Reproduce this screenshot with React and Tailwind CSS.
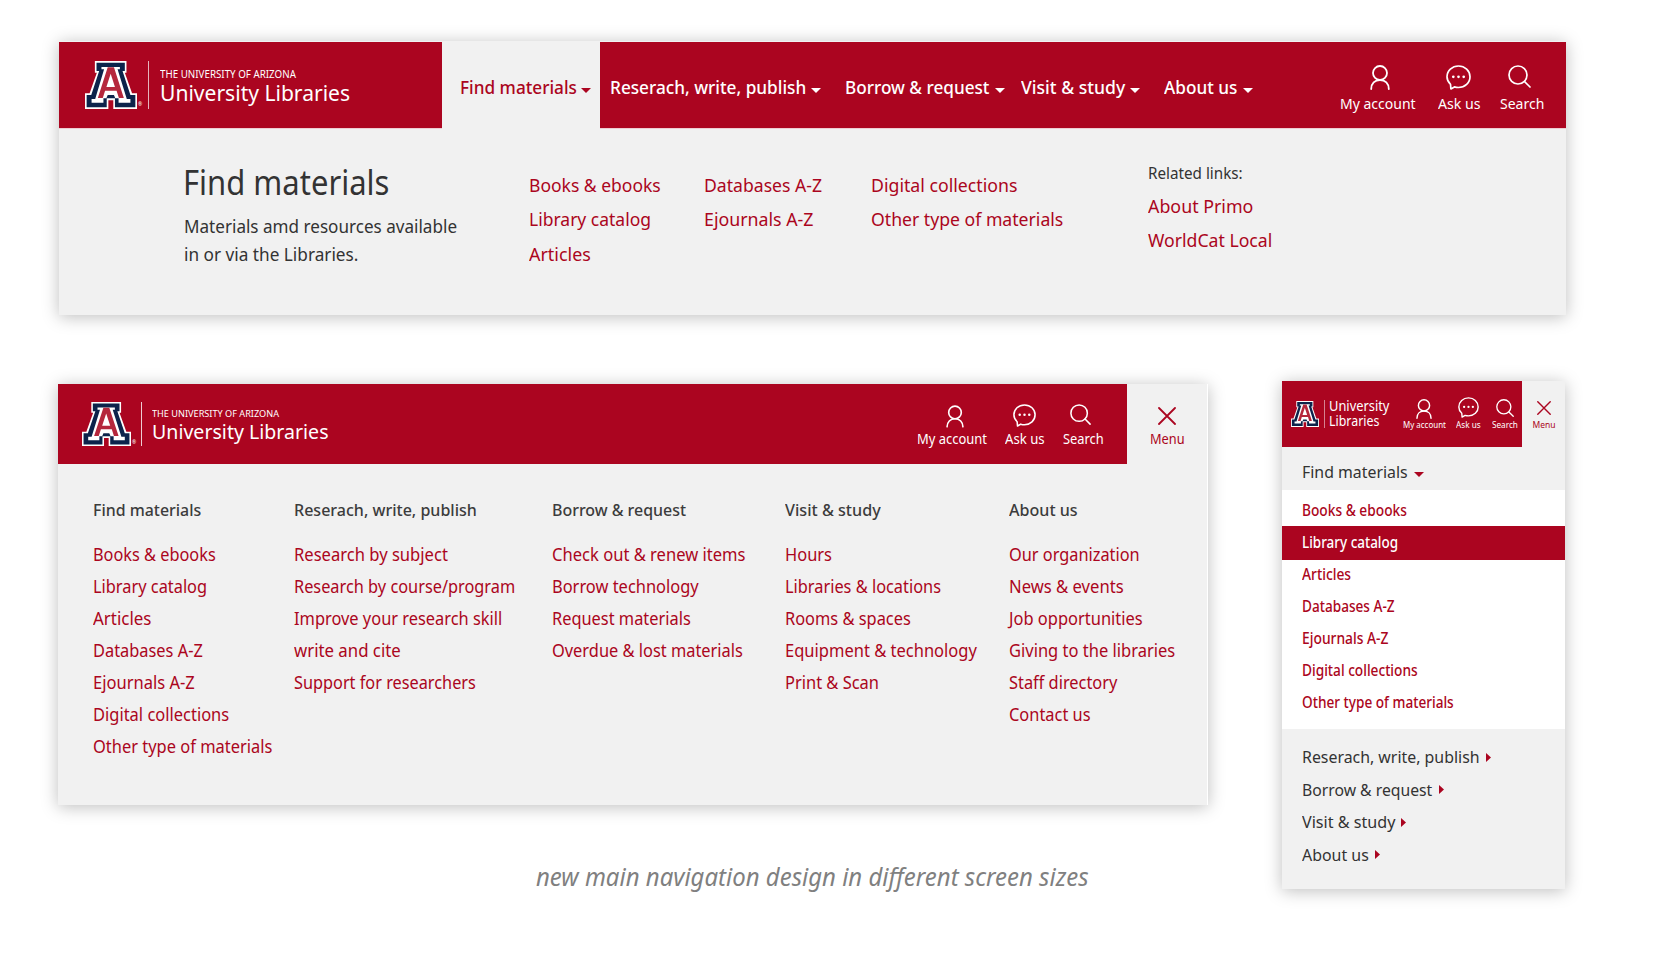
import { useLayoutEffect, useRef, useState } from 'react';

/* Text set condensed so that it fills a given measure. */
function T({ w, className = '', children }) {
  const ref = useRef(null);
  const [scale, setScale] = useState(1);
  useLayoutEffect(() => {
    if (ref.current) setScale((w + 1) / ref.current.offsetWidth);
  }, [w, children]);
  return (
    <span className={`-mr-px block shrink-0 ${className}`} style={{ width: w + 1 }}>
      <span ref={ref} className="inline-block origin-left whitespace-nowrap align-top" style={{ transform: `scaleX(${scale})` }}>
        {children}
      </span>
    </span>
  );
}

function BlockA({ className }) {
  return (
    <svg viewBox="0 0 158 144" preserveAspectRatio="none" className={`shrink-0 ${className}`}>
      <path fill="#fff" d="M30 0H126V35H121L143 97H158V144H86V118H71V144H0V97H14L36 35H30Z" />
      <path fill="#0c234b" d="M35 5H121V30H114L138 102H153V139H91V112H66V139H5V102H19L43 30H35Z" />
      <path fill="#fff" d="M50 18H106V25H99L127 114H138V125H102V112H92L88 102H69L65 112H56V125H20V114H31L58 25H50Z" />
      <path fill="#b5273c" fillRule="evenodd" d="M69 19H88L118 111H103L96 89H61L54 111H39ZM78 38L65 78H91Z" />
    </svg>
  );
}

function UserIcon({ className }) {
  return (
    <svg viewBox="0 0 20 25" fill="none" stroke="currentColor" strokeWidth="1.8" strokeLinecap="round" className={className}>
      <circle cx="10" cy="8" r="7" />
      <path d="M1.2 24C1.2 18.6 4.8 15 10 15s8.8 3.600 8.800 9" />
    </svg>
  );
}

function ChatIcon({ className }) {
  return (
    <svg viewBox="0 0 25 25" fill="none" stroke="currentColor" strokeWidth="1.700" strokeLinecap="round" strokeLinejoin="round" className={className}>
      <path d="M4.900 23.900L4.500 19.300C2.300 17.300 1 14.700 1 11.800 1 5.700 6.100 1 12.500 1S24 5.700 24 11.800 18.900 22.500 12.500 22.500c-1.500 0-2.800-.2-4.100-.6Z" />
      <g fill="currentColor" stroke="none">
        <circle cx="7.300" cy="11.800" r="1.350" />
        <circle cx="12.500" cy="11.800" r="1.350" />
        <circle cx="17.700" cy="11.800" r="1.350" />
      </g>
    </svg>
  );
}

function SearchIcon({ className }) {
  return (
    <svg viewBox="0 0 23 23" fill="none" stroke="currentColor" strokeWidth="1.700" strokeLinecap="round" className={className}>
      <circle cx="10" cy="10" r="9" />
      <path d="M16.500 16.500L22 22" />
    </svg>
  );
}

function CloseIcon({ className }) {
  return (
    <svg viewBox="0 0 18 18" fill="none" stroke="currentColor" strokeWidth="1.800" strokeLinecap="round" className={className}>
      <path d="M1 1L17 17M17 1L1 17" />
    </svg>
  );
}

function CaretDown({ className = '' }) {
  return (
    <svg viewBox="0 0 10 5" className={`h-[5px] w-[10px] shrink-0 ${className}`}>
      <path d="M0 0H10L5 5Z" fill="currentColor" />
    </svg>
  );
}

function CaretRight({ className = '' }) {
  return (
    <svg viewBox="0 0 5 9" className={`h-[9px] w-[5px] shrink-0 text-[#ab0520] ${className}`}>
      <path d="M0 0V9L5 4.500Z" fill="currentColor" />
    </svg>
  );
}

function Links({ items, className = '' }) {
  return (
    <ul className={className}>
      {items.map(([label, w]) => (
        <li key={label}><a><T w={w}>{label}</T></a></li>
      ))}
    </ul>
  );
}

const columns = [
  { title: ['Find materials', 107.5], width: 'w-[201px]', items: [['Books & ebooks', 122], ['Library catalog', 113], ['Articles', 57], ['Databases A-Z', 108.5], ['Ejournals A-Z', 101], ['Digital collections', 135.5], ['Other type of materials', 178.5]] },
  { title: ['Reserach, write, publish', 182], width: 'w-[258px]', items: [['Research by subject', 152.5], ['Research by course/program', 220], ['Improve your research skill', 207], ['write and cite', 105.5], ['Support for researchers', 180.5]] },
  { title: ['Borrow & request', 133], width: 'w-[233px]', items: [['Check out & renew items', 193], ['Borrow technology', 145.5], ['Request materials', 137.5], ['Overdue & lost materials', 190]] },
  { title: ['Visit & study', 95], width: 'w-[224px]', items: [['Hours', 46], ['Libraries & locations', 155], ['Rooms & spaces', 124.5], ['Equipment & technology', 190.5], ['Print & Scan', 93]] },
  { title: ['About us', 68], width: 'w-[180px]', items: [['Our organization', 129.5], ['News & events', 114], ['Job opportunities', 132.5], ['Giving to the libraries', 165], ['Staff directory', 107.5], ['Contact us', 80.5]] },
];

const mobileLinks = [['Books & ebooks', 103.5], ['Library catalog', 95.5], ['Articles', 48], ['Databases A-Z', 92], ['Ejournals A-Z', 85.5], ['Digital collections', 114.5], ['Other type of materials', 151]];

const mobileSections = [['Reserach, write, publish', 176.5], ['Borrow & request', 129.5], ['Visit & study', 92], ['About us', 65.5]];

function DesktopNav() {
  return (
    <section className="h-[274px] w-[1507px] bg-[#f1f1f1] shadow-[0_2px_16px_rgba(0,0,0,0.26)]">
      <header className="flex h-[88px] pt-px text-white">
        <div className="flex w-[383px] border-b border-white/80 bg-[#ab0520] pt-[19px] pl-[26px]">
          <BlockA className="h-12 w-[52px]" />
          <span className="mt-[41px] ml-px text-[5px] leading-none">®</span>
          <span className="ml-[6px] h-12 w-px bg-white/70" />
          <div className="ml-[11px] pt-[7px]">
            <T w={135} className="text-[10px] leading-3">THE UNIVERSITY OF ARIZONA</T>
            <T w={189} className="mt-px text-[21.500px] leading-6">University Libraries</T>
          </div>
        </div>
        <div className="-mt-px flex w-[158px] items-start pt-[35px] pl-[17.500px] text-[#ab0520]">
          <T w={115.500} className="text-lg leading-[22px] font-medium">Find materials</T>
          <CaretDown className="mt-[12px] ml-[6px]" />
        </div>
        <nav className="flex flex-1 border-b border-white/80 bg-[#ab0520] pt-[34px] pl-[9.500px] text-lg leading-[22px] font-medium">
          <T w={195}>Reserach, write, publish</T>
          <CaretDown className="mt-[12px] ml-[6px]" />
          <T w={143} className="ml-[24px]">Borrow & request</T>
          <CaretDown className="mt-[12px] ml-[7px]" />
          <T w={103.500} className="ml-[16.500px]">Visit & study</T>
          <CaretDown className="mt-[12px] ml-[5px]" />
          <T w={72.500} className="ml-[24.500px]">About us</T>
          <CaretDown className="mt-[12px] ml-[6px]" />
        </nav>
        <div className="flex w-[226px] border-b border-white/80 bg-[#ab0520] pt-[23px] text-sm leading-5">
          <a className="flex w-[75px] flex-col items-center">
            <UserIcon className="ml-1 h-[25px] w-5" />
            <T w={75} className="mt-[4px]">My account</T>
          </a>
          <a className="ml-[22.500px] flex w-[42px] flex-col items-center">
            <ChatIcon className="mr-px h-[25px] w-[25px]" />
            <T w={41.500} className="mt-[4px]">Ask us</T>
          </a>
          <a className="ml-[20.500px] flex w-[43px] flex-col items-center">
            <SearchIcon className="mr-[5px] mb-0.5 h-[23px] w-[23px]" />
            <T w={43} className="mt-[4px]">Search</T>
          </a>
        </div>
      </header>
      <div className="flex pl-[124px] text-[#333]">
        <div className="w-[346px] pt-[33px]">
          <T w={205} className="text-[34px] leading-10">Find materials</T>
          <div className="mt-[10px] pl-px text-[17.500px] leading-7">
            <T w={272.500}>Materials amd resources available</T>
            <T w={173}>in or via the Libraries.</T>
          </div>
        </div>
        <Links className="w-[174.500px] pt-[38.500px] text-[18.500px] leading-[34.500px] text-[#ab0520]" items={[['Books & ebooks', 130.5], ['Library catalog', 121], ['Articles', 61]]} />
        <Links className="w-[167px] pt-[38.500px] text-[18.500px] leading-[34.500px] text-[#ab0520]" items={[['Databases A-Z', 117], ['Ejournals A-Z', 108.500]]} />
        <Links className="w-[277px] pt-[38.500px] text-[18.500px] leading-[34.500px] text-[#ab0520]" items={[['Digital collections', 145.500], ['Other type of materials', 191.500]]} />
        <div className="pt-[31px]">
          <T w={94} className="text-[16.500px] leading-[26px]">Related links:</T>
          <Links className="mt-[2.500px] text-[18.500px] leading-[34.500px] text-[#ab0520]" items={[['About Primo', 104], ['WorldCat Local', 123]]} />
        </div>
      </div>
    </section>
  );
}

function TabletNav() {
  return (
    <section className="h-[421px] w-[1150px] border-r border-white bg-[#f1f1f1] shadow-[0_2px_16px_rgba(0,0,0,0.26)]">
      <header className="flex h-20 text-white">
        <div className="flex w-[859px] bg-[#ab0520] pt-[18px] pl-6">
          <BlockA className="h-[44px] w-[49px]" />
          <span className="mt-[38px] ml-px text-[5px] leading-none">®</span>
          <span className="ml-[5px] h-[44px] w-px bg-white/80" />
          <div className="ml-[10px] pt-[6px]">
            <T w={126} className="text-[9px] leading-3">THE UNIVERSITY OF ARIZONA</T>
            <T w={176} className="mt-px text-[20px] leading-[22px]">University Libraries</T>
          </div>
        </div>
        <div className="flex w-[210px] bg-[#ab0520] pt-5 text-[13.500px] leading-5">
          <a className="flex w-[69px] flex-col items-center">
            <UserIcon className="mt-px ml-1.5 h-[23px] w-[18px]" />
            <T w={69} className="mt-[0.500px]">My account</T>
          </a>
          <a className="ml-[18.500px] flex w-[39px] flex-col items-center">
            <ChatIcon className="mb-px h-[23px] w-[23px]" />
            <T w={39} className="mt-[0.500px]">Ask us</T>
          </a>
          <a className="ml-[19px] flex w-10 flex-col items-center">
            <SearchIcon className="mr-1 mb-[3px] h-[21px] w-[21px]" />
            <T w={40} className="mt-[0.500px]">Search</T>
          </a>
        </div>
        <a className="flex w-[80px] flex-col items-center pt-[23px] text-[13.500px] leading-5 text-[#ab0520]">
          <CloseIcon className="mr-px h-[18px] w-[18px]" />
          <T w={34} className="mt-[3.500px]">Menu</T>
        </a>
      </header>
      <div className="flex pt-[34px] pl-[35px]">
        {columns.map((c) => (
          <div key={c.title[0]} className={`shrink-0 ${c.width}`}>
            <h3 className="text-[17px] leading-6 font-medium text-[#3c3c3c]"><T w={c.title[1]}>{c.title[0]}</T></h3>
            <Links items={c.items} className="mt-4 text-[17.500px] leading-8 text-[#ab0520]" />
          </div>
        ))}
      </div>
    </section>
  );
}

function MobileNav() {
  return (
    <section className="h-[508px] w-[283px] bg-[#f1f1f1] text-[#333] shadow-[0_2px_16px_rgba(0,0,0,0.26)]">
      <header className="flex h-[66px] text-white">
        <div className="flex w-[240px] bg-[#ab0520] pl-[9px]">
          <BlockA className="mt-[20px] h-[26px] w-[28px]" />
          <span className="mt-[19px] ml-[5px] h-7 w-px bg-white/50" />
          <div className="ml-1 w-[62px] pt-[18px] text-[13.500px] leading-[15px]">
            <T w={59}>University</T>
            <T w={49.500}>Libraries</T>
          </div>
          <div className="ml-[12px] flex pt-4 text-[8.500px] leading-3">
            <a className="flex w-[42px] flex-col items-center">
              <UserIcon className="mt-[2px] h-[20px] w-[16px]" />
              <T w={42}>My account</T>
            </a>
            <a className="ml-[11px] flex w-[24px] flex-col items-center">
              <ChatIcon className="mb-px h-[21px] w-[21px]" />
              <T w={24}>Ask us</T>
            </a>
            <a className="ml-[12px] flex w-[25px] flex-col items-center">
              <SearchIcon className="mt-[2px] mb-[2px] h-[18px] w-[18px]" />
              <T w={25}>Search</T>
            </a>
          </div>
        </div>
        <a className="flex w-[43px] flex-col items-center pt-5 text-[8.500px] leading-3 text-[#ab0520]">
          <CloseIcon className="h-[14px] w-[14px]" />
          <T w={22} className="mt-[4px]">Menu</T>
        </a>
      </header>
      <div className="flex h-[43px] pt-[13px] pl-5">
        <T w={104.5} className="text-[17px] leading-6">Find materials</T>
        <CaretDown className="mt-[12px] ml-[7px] text-[#ab0520]" />
      </div>
      <ul className="h-[239px] bg-white pt-1 text-[15.500px] leading-8 font-medium text-[#ab0520]">
        {mobileLinks.map(([label, w], i) => (
          <li key={label} className={i === 1 ? 'h-[34px] bg-[#ab0520] pl-5 text-white' : i === 2 ? 'h-[30px] pl-5 leading-7' : 'h-8 pl-5'}>
            <T w={w}>{label}</T>
          </li>
        ))}
      </ul>
      <ul className="pt-[12px] text-[17px] leading-[32.500px]">
        {mobileSections.map(([label, w]) => (
          <li key={label} className="flex items-center pl-5">
            <T w={w}>{label}</T>
            <CaretRight className="ml-[7px]" />
          </li>
        ))}
      </ul>
    </section>
  );
}

export default function App() {
  return (
    <main className="h-[964px] w-[1659px] overflow-hidden bg-white pt-[41px] pl-[58px] font-['Noto_Sans',sans-serif]">
      <div className="pl-px"><DesktopNav /></div>
      <div className="mt-[66px] flex gap-[74px]">
        <div className="pt-[3px]">
          <TabletNav />
          <div className="mt-[53px] pl-[478px] text-[25px] leading-9 text-[#808080] italic">
            <T w={552}>new main navigation design in different screen sizes</T>
          </div>
        </div>
        <MobileNav />
      </div>
    </main>
  );
}
